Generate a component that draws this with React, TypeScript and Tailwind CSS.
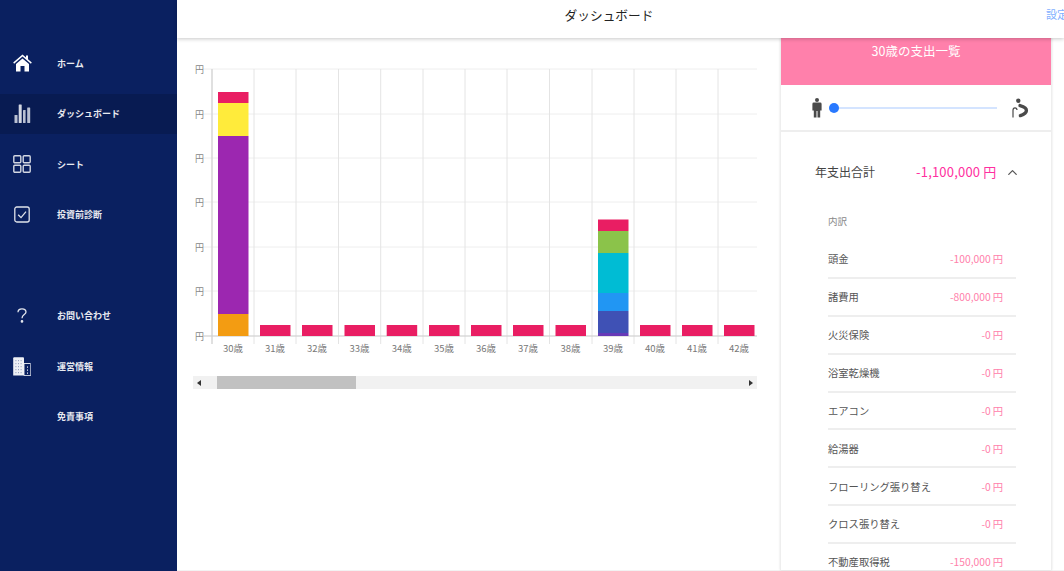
import { ChevronUp } from "lucide-react";
import type { ReactNode } from "react";

const FONT = "font-['Noto_Sans_CJK_JP','Noto_Sans',sans-serif]";

const HomeIcon = () => (
  <svg width="19" height="18" viewBox="0 0 19 18" fill="white">
    <path d="M9.5 0.6 L13 3.6 V1.6 H15 V5.3 L18.8 8.6 L17.9 9.7 L9.5 2.6 L1.1 9.7 L0.2 8.6 Z" />
    <path d="M3 10 L9.5 4.4 L16 10 V17.6 H11.5 V12 H7.5 V17.6 H3 Z" />
  </svg>
);

const BarsIcon = () => (
  <svg width="17" height="19" viewBox="0 0 17 19" fill="#b9c0d2">
    <rect x="0.5" y="11" width="3" height="8" rx="0.5" />
    <rect x="4.7" y="0.5" width="3" height="18.5" rx="0.5" fill="#d3d7e2" />
    <rect x="9" y="6" width="2.6" height="13" rx="0.5" />
    <rect x="13.2" y="3.5" width="3" height="15.5" rx="0.5" />
  </svg>
);

const GridIcon = () => (
  <svg width="18" height="18" viewBox="0 0 18 18" fill="none" stroke="#d3d7e2" strokeWidth="1.4">
    <rect x="0.8" y="0.8" width="7" height="7" rx="1" />
    <rect x="10.2" y="0.8" width="7" height="7" rx="1" />
    <rect x="0.8" y="10.2" width="7" height="7" rx="1" />
    <rect x="10.2" y="10.2" width="7" height="7" rx="1" />
  </svg>
);

const CheckIcon = () => (
  <svg width="16" height="17" viewBox="0 0 16 17" fill="none" stroke="#e0e3ea" strokeWidth="1.3">
    <rect x="0.8" y="1" width="14.4" height="15" rx="2" />
    <path d="M4.2 8.8 L7 11.6 L12 5.6" />
  </svg>
);

const QuestionIcon = () => (
  <svg width="10" height="15" viewBox="0 0 10 15" fill="none" stroke="#e4e7ee" strokeWidth="1.3">
    <path d="M1 4.2 C1 2 2.8 0.8 5 0.8 C7.2 0.8 9 2.1 9 4 C9 6.6 5 6.7 5 10.2" />
    <circle cx="5" cy="13.4" r="0.7" fill="#e4e7ee" />
  </svg>
);

const BuildingIcon = () => (
  <svg width="18" height="19" viewBox="0 0 18 19">
    <path d="M1.2 0.3 H10 Q11 0.3 11 1.3 V18.6 H0.2 V1.3 Q0.2 0.3 1.2 0.3 Z" fill="#eef0f5" />
    <path d="M12 6.5 H17 Q17.8 6.5 17.8 7.3 V18.6 H11 V6.5 Z" fill="none" stroke="#eef0f5" strokeWidth="0.9" />
    <g fill="#98a4c0">
      {[3, 6, 9, 12, 15].map((y) => (
        <g key={y}>
          <rect x="2.4" y={y} width="1" height="1.2" />
          <rect x="5" y={y} width="1" height="1.2" />
          <rect x="7.6" y={y} width="1" height="1.2" />
        </g>
      ))}
    </g>
    <g fill="white">
      <rect x="14" y="9.5" width="1" height="1.2" />
      <rect x="14" y="12.5" width="1" height="1.2" />
      <rect x="14" y="15.5" width="1" height="1.2" />
    </g>
  </svg>
);

const PersonIcon = () => (
  <svg width="10" height="20" viewBox="0 0 10 20" fill="#4a4a4a">
    <circle cx="5" cy="2" r="2" />
    <path d="M1.8 4.6 H8.2 Q9.6 4.6 9.6 6 V12.4 H8.2 V19.6 H5.5 V13 H4.5 V19.6 H1.8 V12.4 H0.4 V6 Q0.4 4.6 1.8 4.6 Z" />
  </svg>
);

const ElderlyIcon = () => (
  <svg width="17" height="20" viewBox="0 0 17 20">
    <circle cx="6.3" cy="2.8" r="2.2" fill="#4a4a4a" />
    <path
      d="M8 7.6 Q14.6 9.4 14.4 12.6 Q14.2 15.6 8.4 17.6"
      fill="none"
      stroke="#4a4a4a"
      strokeWidth="3.4"
      strokeLinecap="round"
    />
    <path d="M1 19.6 V12.2 Q1 9.8 3 9.8 Q5 9.8 5 12" fill="none" stroke="#4a4a4a" strokeWidth="1.2" />
  </svg>
);

type NavItem = { label: string; icon?: ReactNode; active?: boolean };

const NAV: (NavItem | null)[] = [
  { label: "ホーム", icon: <HomeIcon /> },
  { label: "ダッシュボード", icon: <BarsIcon />, active: true },
  { label: "シート", icon: <GridIcon /> },
  { label: "投資前診断", icon: <CheckIcon /> },
  null,
  { label: "お問い合わせ", icon: <QuestionIcon /> },
  { label: "運営情報", icon: <BuildingIcon /> },
  { label: "免責事項" },
];

const ROWS = [
  ["頭金", "-100,000"],
  ["諸費用", "-800,000"],
  ["火災保険", "-0"],
  ["浴室乾燥機", "-0"],
  ["エアコン", "-0"],
  ["給湯器", "-0"],
  ["フローリング張り替え", "-0"],
  ["クロス張り替え", "-0"],
  ["不動産取得税", "-150,000"],
];

const GRID_X = [19, 61, 103, 145.5, 187.7, 230, 272, 314, 356.5, 399, 441, 483, 525];
const GRID_Y = [9, 54, 98, 142, 187, 231, 276];

// segments are listed as [top, bottom, colour], y is inside the chart svg
const BAR_30: [number, number, string][] = [
  [32, 43, "#e91e63"],
  [43, 76, "#ffeb3b"],
  [76, 254, "#9c27b0"],
  [254, 276, "#f39c12"],
];
const BAR_39: [number, number, string][] = [
  [159.5, 171, "#e91e63"],
  [171, 193, "#8bc34a"],
  [193, 233, "#00bcd4"],
  [233, 251, "#2196f3"],
  [251, 273, "#3f51b5"],
  [273, 276, "#673ab7"],
];

function Chart() {
  return (
    <svg width="564" height="304" viewBox="0 0 564 304" className="block">
      {GRID_Y.map((y) => (
        <g key={y}>
          <line x1="10" x2="564" y1={y} y2={y} stroke="#eeeeee" />
          <text x="2" y={y + 3.5} fontSize="9" fill="#888888">
            円
          </text>
        </g>
      ))}
      {GRID_X.map((x) => (
        <line key={x} x1={x} x2={x} y1="9" y2="284" stroke="#e4e4e4" />
      ))}
      <line x1="19" x2="19" y1="9" y2="284" stroke="#cfcfcf" />
      <line x1="10" x2="564" y1="276" y2="276" stroke="#cfcfcf" />
      {GRID_X.map((x, i) => {
        const bar = i === 0 ? BAR_30 : i === 9 ? BAR_39 : ([[265, 276, "#e91e63"]] as [number, number, string][]);
        return (
          <g key={x}>
            {bar.map(([top, bottom, color]) => (
              <rect key={color} x={x + 6} y={top} width="30.5" height={bottom - top} fill={color} />
            ))}
            <text x={x + 21} y="292" fontSize="9.5" fill="#777777" textAnchor="middle">
              {30 + i}歳
            </text>
          </g>
        );
      })}
    </svg>
  );
}

export default function App() {
  return (
    <div className={`flex h-[571px] w-[1064px] overflow-hidden bg-white ${FONT}`}>
      <aside className="flex w-[177px] shrink-0 flex-col gap-[10.5px] bg-[#0a2060] pt-[43px]">
        {NAV.map((item, i) =>
          item ? (
            <div
              key={item.label}
              className={`flex h-10 items-center ${item.active ? "bg-[#081b52]" : ""}`}
            >
              <div className="flex w-[44px] justify-center">{item.icon}</div>
              <span className="mt-[1px] ml-[13px] text-[9px] font-bold text-[#e8eaf0]">{item.label}</span>
            </div>
          ) : (
            <div key={i} className="h-10" />
          ),
        )}
      </aside>

      <div className="flex min-w-0 flex-1 flex-col">
        <header className="relative z-10 flex h-[38px] shrink-0 items-center overflow-hidden bg-white pb-[9px] shadow-[0_1px_4px_rgba(0,0,0,0.22)]">
          <h1 className="w-[864px] shrink-0 text-center text-[12.7px] text-[#222222]">ダッシュボード</h1>
          <span className="ml-[5px] shrink-0 whitespace-nowrap text-[11px] text-[#7fb0ff]">設定</span>
        </header>

        <div className="flex min-h-0 flex-1 border-b border-[#f2f2f2]">
          <section className="ml-4 w-[564px] shrink-0 pt-[22px]">
            <Chart />
            <div className="mt-[12px] flex h-[13px] items-center bg-[#f1f1f1]">
              <span className="ml-[4px] h-0 w-0 border-y-[3px] border-r-[4px] border-y-transparent border-r-[#333333]" />
              <div className="ml-[16px] h-full w-[139px] bg-[#c1c1c1]" />
              <span className="mr-[4px] ml-auto h-0 w-0 border-y-[3px] border-l-[4px] border-y-transparent border-l-[#333333]" />
            </div>
          </section>

          <section className="ml-[23px] w-[272px] shrink-0 overflow-hidden border-x border-[#eeeeee] shadow-[0_0_2px_rgba(0,0,0,0.12)]">
            <div className="h-[47px] bg-[#ff80ab] pt-[4px] text-center text-[12.5px] text-white">
              30歳の支出一覧
            </div>

            <div className="flex h-[47px] items-center border-b-2 border-[#eeeeee] pl-[31px]">
              <PersonIcon />
              <div className="relative ml-[12px] h-[2px] w-[163px] bg-[#d4e4ff]">
                <span className="absolute top-[-4px] left-[-5px] h-[10px] w-[10px] rounded-full bg-[#2979ff]" />
              </div>
              <div className="ml-[15px]">
                <ElderlyIcon />
              </div>
            </div>

            <div className="flex items-center pt-[31px] pl-[34px] leading-[18px]">
              <span className="w-[101px] text-[12px] text-[#444444]">年支出合計</span>
              <span className="text-[13px] tracking-[0.2px] whitespace-nowrap text-[#ff2fa0]">-1,100,000 円</span>
              <ChevronUp size={15} strokeWidth={2} className="ml-[8px] text-[#555555]" />
            </div>

            <div className="pt-[33px] pl-[47px] text-[9.5px] leading-[14px] text-[#888888]">内訳</div>

            <ul className="mt-[13px] ml-[47px] w-[188px]">
              {ROWS.map(([name, value]) => (
                <li
                  key={name}
                  className="flex h-[37.9px] items-center justify-between border-b-2 border-[#eeeeee] pr-[13px]"
                >
                  <span className="text-[10.3px] text-[#555555]">{name}</span>
                  <span className="text-[10.3px] text-[#ff80ab]">
                    {value}
                    <span className="ml-[2px]">円</span>
                  </span>
                </li>
              ))}
            </ul>
          </section>
        </div>
      </div>
    </div>
  );
}
